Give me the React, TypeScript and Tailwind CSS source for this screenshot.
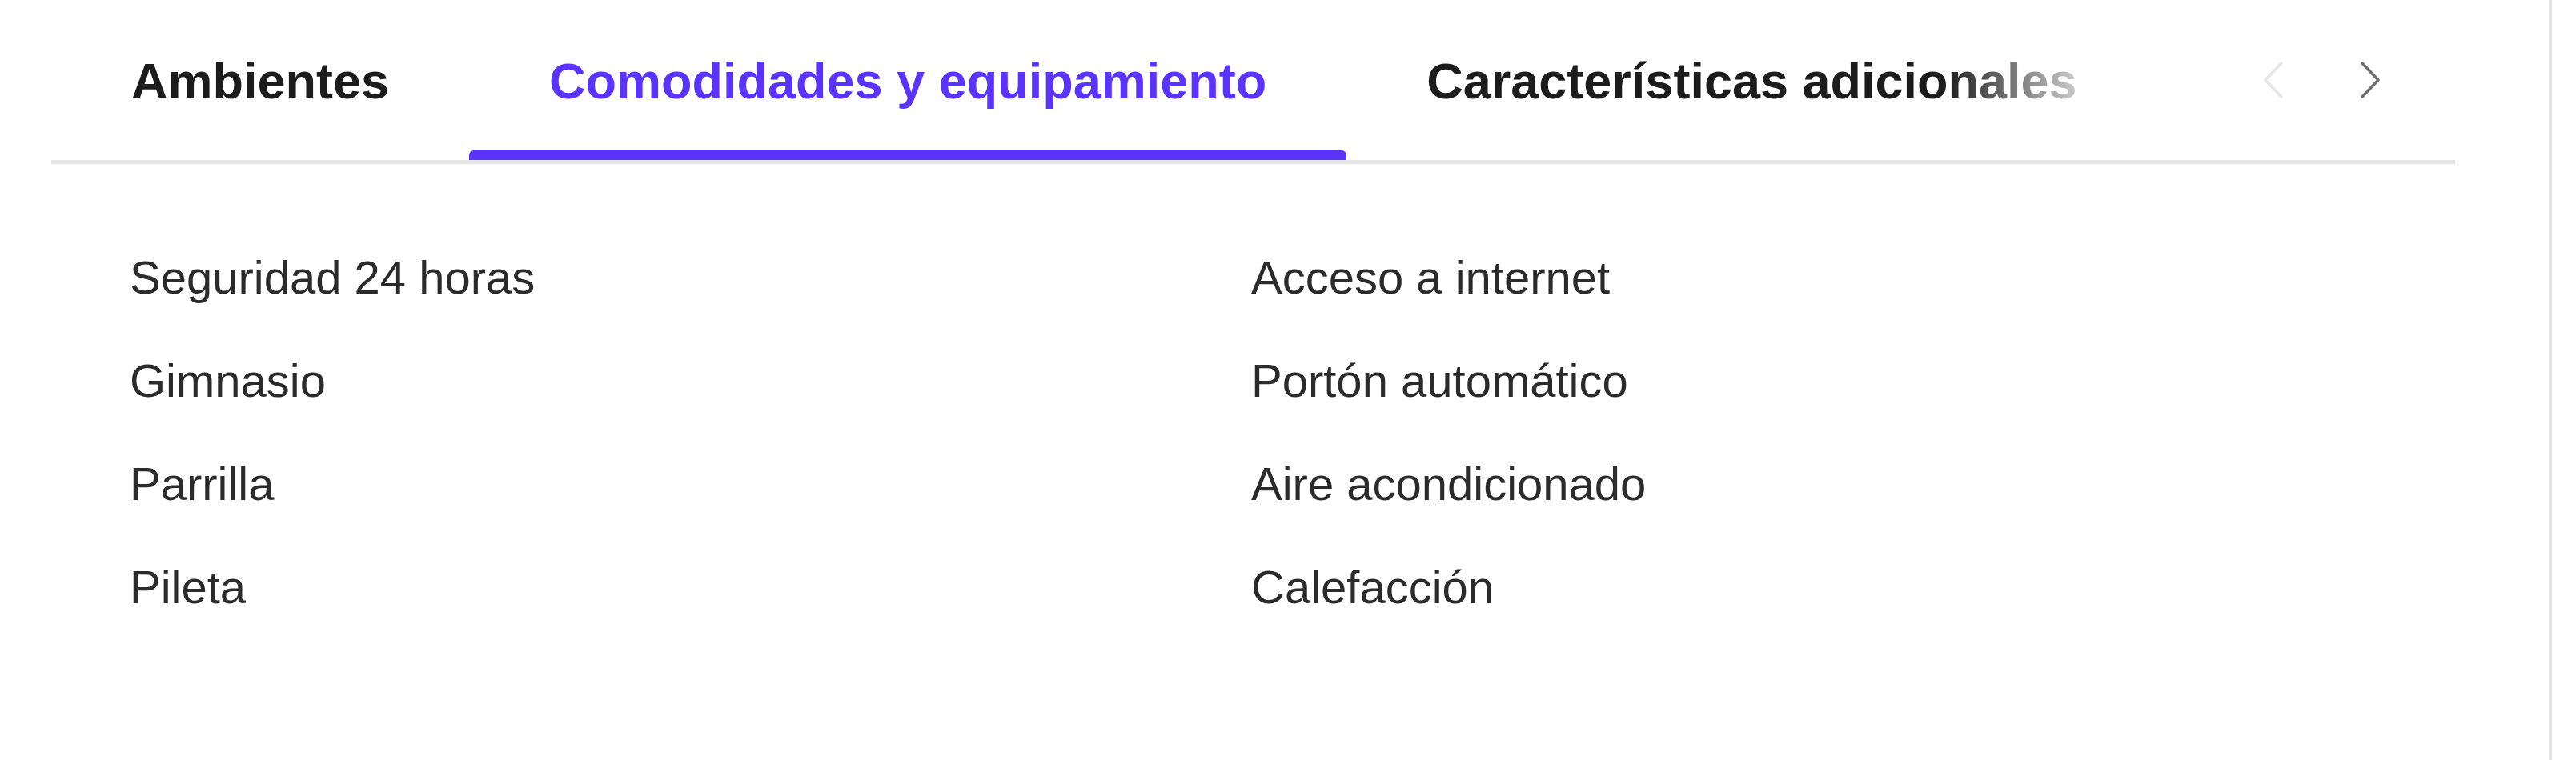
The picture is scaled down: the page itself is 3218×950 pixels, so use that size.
import React, { useState } from 'react';

const tabs = ['Ambientes', 'Comodidades y equipamiento', 'Características adicionales'];

const amenities = [
  'Seguridad 24 horas',
  'Acceso a internet',
  'Gimnasio',
  'Portón automático',
  'Parrilla',
  'Aire acondicionado',
  'Pileta',
  'Calefacción',
];

const Chevron = ({ dir, color }: { dir: 'left' | 'right'; color: string }) => (
  <svg width="26" height="46" viewBox="0 0 26 46" fill="none">
    <polyline
      points={dir === 'left' ? '23,2 3,23 23,44' : '3,2 23,23 3,44'}
      stroke={color}
      strokeWidth="3.5"
      strokeLinecap="round"
      strokeLinejoin="round"
    />
  </svg>
);

const App = () => {
  const [active, setActive] = useState(1);

  return (
    <div className="min-h-screen bg-white flex font-['Liberation_Sans',Arial,sans-serif]">
      <div className="w-[3188px] min-h-screen border-r-4 border-[#e4e4e4] pl-[64px] pr-[117px]">
        {/* tab bar */}
        <div className="flex items-center justify-between border-b-[5px] border-[#e5e5e5]">
          <div className="relative w-[2536px] shrink-0 overflow-hidden">
            <div className="flex whitespace-nowrap">
              {tabs.map((tab, i) => (
                <button key={tab} onClick={() => setActive(i)} className="flex flex-col shrink-0">
                  <span
                    className={`px-[100px] pt-[70px] pb-[55px] text-[63px] leading-none font-bold ${
                      i === active ? 'text-[#5a33ff]' : 'text-[#1c1c1c]'
                    }`}
                  >
                    {tab}
                  </span>
                  <span
                    className={`h-[12px] w-full rounded-t-[6px] ${
                      i === active ? 'bg-[#5a33ff]' : 'bg-transparent'
                    }`}
                  />
                </button>
              ))}
            </div>
            <div className="absolute right-0 top-0 bottom-0 w-[170px] bg-gradient-to-r from-white/0 to-white/80 pointer-events-none" />
          </div>
          <div className="flex items-center gap-[95px] mr-[93px]">
            <button className="flex">
              <Chevron dir="left" color="#e6e6e6" />
            </button>
            <button className="flex">
              <Chevron dir="right" color="#6e6e6e" />
            </button>
          </div>
        </div>

        {/* amenities */}
        <ul className="grid grid-cols-2 gap-y-[63px] pl-[98px] pr-[103px] pt-[109px]">
          {amenities.map((item) => (
            <li key={item} className="text-[58px] leading-[66px] text-[#2b2b2b]">
              {item}
            </li>
          ))}
        </ul>
      </div>
    </div>
  );
};

export default App;
